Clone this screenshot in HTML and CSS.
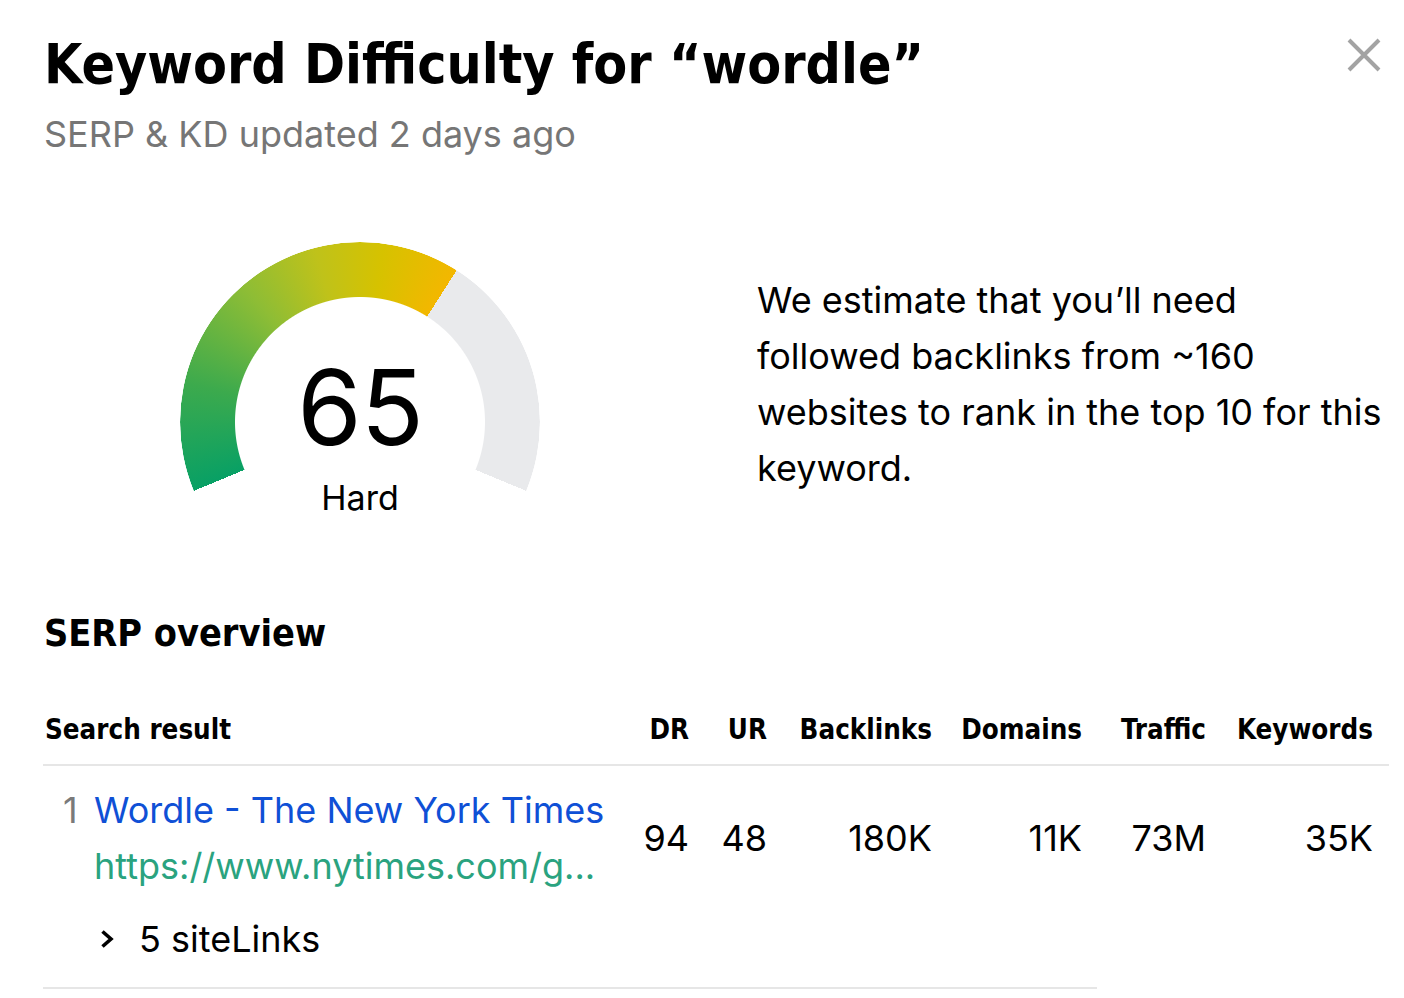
FILE: index.html
```html
<!DOCTYPE html>
<html lang="en">
<head>
<meta charset="utf-8">
<title>Keyword Difficulty</title>
<link rel="stylesheet" href="styles.css">
</head>
<body>
<div class="modal">
  <header class="header">
    <div class="heading">
      <h1 class="title">Keyword Difficulty for “wordle”</h1>
      <p class="subtitle">SERP &amp; KD updated 2 days ago</p>
    </div>
    <button class="close" aria-label="Close">
      <svg width="34" height="34" viewBox="0 0 34 34"><path d="M2 2 L32 32 M32 2 L2 32" stroke="#a3a3a3" stroke-width="4" fill="none"/></svg>
    </button>
  </header>

  <section class="kd">
    <div class="gauge">
      <div class="ring"></div>
      <div class="gauge-label">
        <div class="score">65</div>
        <div class="level">Hard</div>
      </div>
    </div>
    <p class="estimate">We estimate that you’ll need followed backlinks from ~160 websites to rank in the top 10 for this keyword.</p>
  </section>

  <h2 class="section-title">SERP overview</h2>

  <div class="table">
    <div class="thead">
      <div class="th th-left">Search result</div>
      <div class="th">DR</div>
      <div class="th">UR</div>
      <div class="th">Backlinks</div>
      <div class="th">Domains</div>
      <div class="th">Traffic</div>
      <div class="th">Keywords</div>
    </div>
    <div class="trow">
      <div class="result">
        <div class="result-main">
          <span class="rank">1</span>
          <div class="result-text">
            <a class="result-title" href="#">Wordle - The New York Times</a>
            <div class="result-url">https://www.nytimes.com/g...</div>
          </div>
        </div>
        <div class="sitelinks">
          <svg class="chev" width="16" height="20" viewBox="0 0 16 20"><path d="M3.5 2.5 L12 10 L3.5 17.5" stroke="#000" stroke-width="3.6" fill="none"/></svg>
          <span>5 siteLinks</span>
        </div>
      </div>
      <div class="td">94</div>
      <div class="td">48</div>
      <div class="td">180K</div>
      <div class="td">11K</div>
      <div class="td">73M</div>
      <div class="td">35K</div>
    </div>
    <div class="row-divider"></div>
  </div>
</div>
</body>
</html>
```

FILE: styles.css
```css
* { box-sizing: border-box; }
html, body { margin: 0; padding: 0; background: #fff; }
body {
  font-family: Inter, "Noto Sans", sans-serif;
  color: #000;
  width: 1404px;
  height: 998px;
  overflow: hidden;
}
.modal {
  padding: 0 15px 0 43px;
}
.header {
  display: flex;
  justify-content: space-between;
  align-items: flex-start;
  padding-top: 31px;
}
.title {
  margin: 0;
  font-family: "DejaVu Sans", sans-serif;
  font-stretch: condensed;
  font-weight: 700;
  font-size: 55px;
  line-height: 66px;
  padding-left: 1px;
}
.subtitle {
  margin: 15px 0 0 1px;
  font-size: 36px;
  line-height: 44px;
  color: #767676;
}
.close {
  border: 0;
  background: none;
  padding: 0;
  margin: 7px 8px 0 0;
  width: 34px;
  height: 34px;
  display: block;
}
.close svg { display: block; }

.kd {
  display: flex;
  align-items: flex-start;
  margin-top: 86px;
  height: 368px;
}
.gauge {
  display: grid;
  width: 360px;
  margin-left: 137px;
}
.ring, .gauge-label { grid-area: 1 / 1; }
.ring {
  width: 360px;
  height: 360px;
  border-radius: 50%;
  background: conic-gradient(from 247.5deg,
    #08a065 0deg,
    #3caa4d 35deg,
    #8ebd35 72deg,
    #bfc21a 98deg,
    #d6c200 120deg,
    #f3b700 145deg,
    #e9eaec 145deg 225deg,
    transparent 225deg);
  -webkit-mask: radial-gradient(circle at center, transparent 124.5px, #000 125.5px, #000 179.5px, transparent 180.5px);
  mask: radial-gradient(circle at center, transparent 124.5px, #000 125.5px, #000 179.5px, transparent 180.5px);
}
.gauge-label {
  padding-top: 113px;
  text-align: center;
}
.score {
  font-size: 104px;
  line-height: 104px;
  font-weight: 400;
  letter-spacing: -1px;
}
.level {
  margin-top: 19px;
  font-size: 34px;
  line-height: 40px;
}
.estimate {
  margin: 30px 0 0 217px;
  width: 632px;
  font-size: 36px;
  line-height: 56px;
}

.section-title {
  margin: 0;
  font-family: "DejaVu Sans", sans-serif;
  font-stretch: condensed;
  font-weight: 700;
  font-size: 37.5px;
  line-height: 46px;
  padding-left: 1px;
}

.table { margin-top: 55px; }
.thead, .trow {
  display: grid;
  grid-template-columns: 597px 49px 78px 165px 150px 124px 167px;
  padding-right: 16px;
}
.thead {
  border-bottom: 2px solid #e6e6e6;
  padding-bottom: 17px;
}
.th {
  font-family: "DejaVu Sans", sans-serif;
  font-stretch: condensed;
  font-weight: 700;
  font-size: 27.5px;
  line-height: 36px;
  text-align: right;
}
.th-left { text-align: left; padding-left: 2px; }

.trow { padding-top: 16px; padding-bottom: 20px; }
.result-main { display: flex; }
.rank {
  width: 51px;
  padding-left: 20px;
  font-size: 36px;
  line-height: 56px;
  color: #7a7a7a;
}
.result-text { display: flex; flex-direction: column; }
.result-title {
  font-size: 36px;
  line-height: 56px;
  color: #0f50d6;
  text-decoration: none;
}
.result-url {
  font-size: 36px;
  line-height: 56px;
  color: #2aa37f;
}
.sitelinks {
  display: flex;
  align-items: center;
  margin: 17px 0 0 56px;
  font-size: 36px;
  line-height: 56px;
}
.chev { display: block; margin-right: 24px; }
.td {
  padding-top: 28px;
  font-size: 36px;
  line-height: 56px;
  text-align: right;
}
.row-divider {
  width: 1054px;
  height: 2px;
  background: #e6e6e6;
}
```
